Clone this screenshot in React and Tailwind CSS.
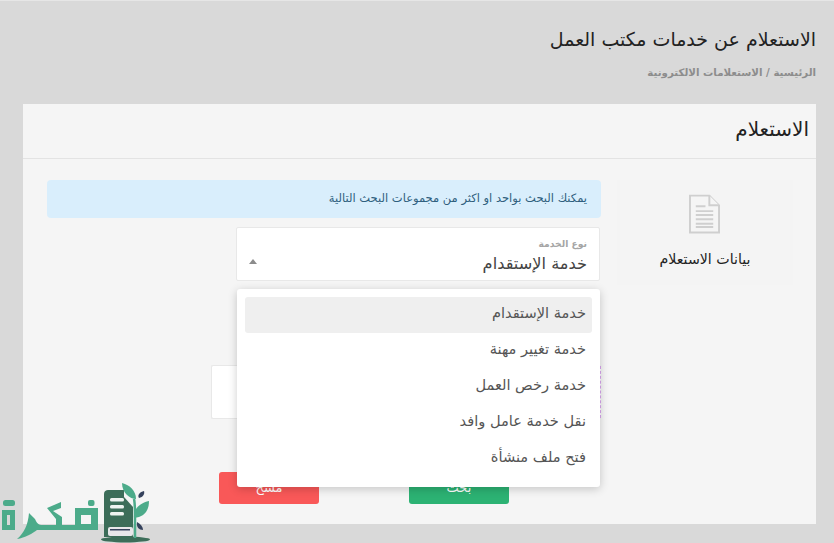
const font = { fontFamily: '"DejaVu Sans", "Noto Sans", sans-serif' };

function DocIcon() {
  return (
    <svg width="31" height="40" viewBox="0 0 32 40" fill="none" className="ml-[-2px]">
      <path d="M1 1H21L31 11V39H1Z" fill="#f5f5f5" stroke="#cfcfcf" strokeWidth="2" />
      <path d="M21 1V11H31" fill="#f5f5f5" stroke="#cfcfcf" strokeWidth="2" />
      <path d="M7 12H17M7 17H25M7 21H25M7 25.500H25M7 30H25M7 33.500H25" stroke="#cfcfcf" strokeWidth="2" />
    </svg>
  );
}

function Logo() {
  return (
    <svg width="150" height="62" viewBox="0 0 150 62" className="absolute left-0 bottom-0">
      <g fill="#4cab8a">
        <rect x="3" y="19" width="12" height="6" rx="2.500" />
        <path d="M2 29H15V49H2ZM7 34V44H10V34Z" fillRule="evenodd" />
        <path d="M17 58C24 52 28 44 29 32L35 38C37 42 38 44 43 44V49H37C33 52 25 57 17 58Z" />
        <rect x="40" y="44" width="58" height="5" />
        <path d="M47 27L61 21V27L53 30L62 36V44H56V38Z" />
        <rect x="88" y="19" width="6.500" height="6" rx="2" />
        <path d="M75 27H98V49H75ZM81 34V43H91V34Z" fillRule="evenodd" />
      </g>
      <path d="M104 13C104 10 106 9 108 9H124V56H104Z" fill="#3c6d59" />
      <path d="M124 16L133 26V56H124Z" fill="#3c6d59" />
      <rect x="110" y="17" width="14" height="3.500" rx="1.500" fill="#eef2f0" />
      <rect x="110" y="24" width="14" height="3.500" rx="1.500" fill="#eef2f0" />
      <rect x="110" y="31" width="14" height="3.500" rx="1.500" fill="#eef2f0" />
      <rect x="108" y="46" width="25" height="9" rx="2" fill="#e7e7ea" />
      <rect x="110" y="48" width="20" height="1.500" fill="#35415c" />
      <ellipse cx="125.500" cy="58.500" rx="24.500" ry="3" fill="#3c6d59" />
      <path d="M135 57V36C135 28 135 22 134 18" stroke="#4cab8a" strokeWidth="2.500" fill="none" />
      <path d="M122 2C130 4 136 10 136 18C130 18 122 12 122 2Z" fill="#4cab8a" />
      <path d="M149 20C149 30 144 36 134 37C133 28 140 22 149 20Z" fill="#4cab8a" />
      <path d="M144 10C145 13 143 16 139 17C137 14 140 11 144 10Z" fill="#35415c" />
      <path d="M137 41C141 43 143 46 143 49C139 49 136 46 137 41Z" fill="#35415c" />
    </svg>
  );
}

const options = [
  'خدمة الإستقدام',
  'خدمة تغيير مهنة',
  'خدمة رخص العمل',
  'نقل خدمة عامل وافد',
  'فتح ملف منشأة',
];

export default function App() {
  return (
    <div
      dir="rtl"
      style={font}
      className="relative w-[834px] h-[543px] overflow-hidden bg-[#d9d9d9] border-t border-[#e6e6e6] pr-[18px] pl-[23px]"
    >
      <div className="h-[103px] pt-[24px]">
        <h1 className="text-[19px] leading-[28px] text-[#222] font-normal">الاستعلام عن خدمات مكتب العمل</h1>
        <p className="mt-[11px] text-[10.250px] leading-[16px] font-bold text-[#8d8d8d]">الرئيسية / الاستعلامات الالكترونية</p>
      </div>

      <div className="relative h-[420px] bg-[#f5f5f5]">
        <div className="h-[55px] border-b border-[#e3e3e3] pr-[7px] flex items-center pb-[4px]">
          <h2 className="text-[20px] font-normal text-[#222] leading-[24px]">الاستعلام</h2>
        </div>

        <div className="flex pt-[21px] pr-[23px] pl-[24px] gap-[16px]">
          <div className="w-[176px] h-[105px] shrink-0 flex flex-col items-center bg-[#f4f4f4]">
            <div className="mt-[14px]"><DocIcon /></div>
            <div className="mt-[15px] text-[14.200px] leading-[20px] text-[#222]">بيانات الاستعلام</div>
          </div>

          <div className="flex-1 min-w-0">
            <div className="h-[38px] rounded-[4px] bg-[#d9eefc] pr-[14px] flex items-center text-[11.500px] text-[#2f5f7e]">
              يمكنك البحث بواحد او اكثر من مجموعات البحث التالية
            </div>

            <div className="mt-[9px] mr-px w-[364px] h-[54px] bg-white border border-[#e8e8e8] rounded-[2px] relative pr-[12px] pt-[10px]">
              <div className="text-[9.200px] leading-[12px] font-bold text-[#a5a5a5]">نوع الخدمة</div>
              <div className="mt-[1px] text-[16.200px] leading-[25px] text-[#444]">خدمة الإستقدام</div>
              <div className="absolute left-[12px] top-[31px] w-0 h-0 border-x-[4px] border-x-transparent border-b-[5px] border-b-[#8c8c8c]"></div>
            </div>

            <div className="mt-[84px] h-[54px] flex justify-start">
              <div className="w-[390px] shrink-0 h-full bg-white border border-[#e8e8e8] border-r-0 rounded-[2px] relative">
                <div className="absolute right-0 top-0 bottom-0 border-r border-dashed border-[#d9a6ee]"></div>
              </div>
            </div>

            <div className="mt-[53px] flex justify-between pr-[92px] pl-[172px]">
              <button className="w-[100px] h-[32px] bg-[#2cb273] text-white rounded-[3px] text-[13px]">بحث</button>
              <button className="w-[100px] h-[32px] bg-[#f95858] text-white rounded-[3px] text-[13px]">مسح</button>
            </div>
          </div>
        </div>

        <div className="absolute left-[214px] top-[185px] w-[363px] h-[198px] bg-white rounded-[3px] shadow-[0_2px_10px_rgba(0,0,0,0.2)] p-[8px]">
          {options.map((o, i) => (
            <div
              key={o}
              className={`h-[36px] pr-[6px] pb-[4px] flex items-center text-[14.600px] text-[#555] rounded-[3px] ${i === 0 ? 'bg-[#efefef]' : ''}`}
            >
              {o}
            </div>
          ))}
        </div>
      </div>

      <Logo />
    </div>
  );
}
